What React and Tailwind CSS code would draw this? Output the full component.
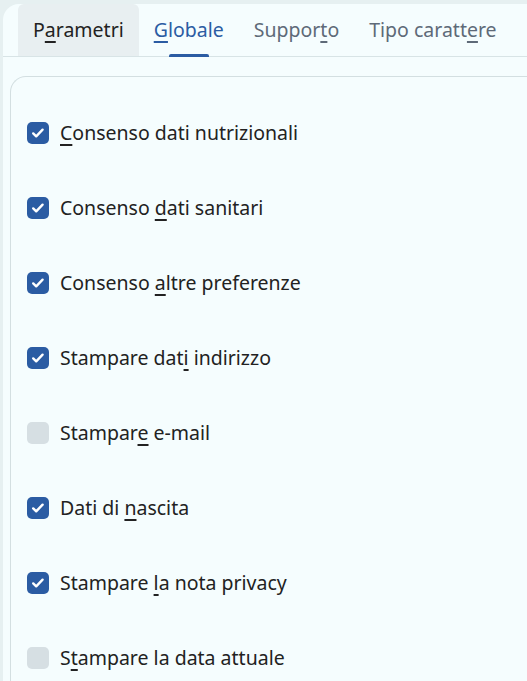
import React, { useState } from 'react';

const tabs = [
  { pre: 'P', key: 'a', post: 'rametri' },
  { pre: '', key: 'G', post: 'lobale' },
  { pre: 'Suppor', key: 't', post: 'o' },
  { pre: 'Tipo carat', key: 'te', post: 're', keyIdx: 1 },
];

const options = [
  { pre: '', key: 'C', post: 'onsenso dati nutrizionali', on: true },
  { pre: 'Consenso ', key: 'd', post: 'ati sanitari', on: true },
  { pre: 'Consenso ', key: 'a', post: 'ltre preferenze', on: true },
  { pre: 'Stampare dat', key: 'i', post: ' indirizzo', on: true },
  { pre: 'Stampar', key: 'e', post: ' e-mail', on: false },
  { pre: 'Dati di ', key: 'n', post: 'ascita', on: true },
  { pre: 'Stampare ', key: 'l', post: 'a nota privacy', on: true },
  { pre: 'S', key: 't', post: 'ampare la data attuale', on: false },
];

const Mnemonic = ({ pre, k, post }) => (
  <span>
    {pre}
    <span className="underline decoration-[2px] underline-offset-[4px]">{k}</span>
    {post}
  </span>
);

const Check = ({ on }) => (
  <span
    className={`flex h-[22px] w-[22px] shrink-0 items-center justify-center rounded-[5px] ${
      on ? 'bg-[#2b5ca3]' : 'bg-[#d6dfe3]'
    }`}
  >
    {on && (
      <svg width="16" height="16" viewBox="0 0 16 16" fill="none">
        <path d="M3.2 8.4l3 2.9 6.4-6.6" stroke="white" strokeWidth="2.4" strokeLinecap="round" strokeLinejoin="round" />
      </svg>
    )}
  </span>
);

export default function App() {
  const [checks, setChecks] = useState(options.map((o) => o.on));

  return (
    <div className="h-screen w-full overflow-hidden bg-[#e6f0f1] pl-[3px] pt-[4px]" style={{ fontFamily: '"Noto Sans", "Open Sans", sans-serif' }}>
      <div className="h-full rounded-tl-[16px] bg-[#f5fdfe]">
        {/* tab bar */}
        <div className="flex h-[53px] border-b border-[#d8e4e6] pl-[15px] text-[19.5px]">
          {tabs.map((t, i) => (
            <div
              key={i}
              className={`relative flex items-center px-[15px] pb-[1px] whitespace-nowrap ${
                i === 0 ? 'rounded-t-[6px] bg-[#e8eff1] text-[#222]' : i === 1 ? 'text-[#2b5ca3]' : 'text-[#5e6a78]'
              }`}
            >
              {i === 3 ? (
                <span>
                  Tipo carat<span>t</span>
                  <span className="underline decoration-[2px] underline-offset-[4px]">e</span>re
                </span>
              ) : (
                <Mnemonic pre={t.pre} k={t.key} post={t.post} />
              )}
              {i === 1 && (
                <span className="absolute bottom-[-1px] left-1/2 h-[3px] w-[40px] -translate-x-1/2 rounded-t-[2px] bg-[#2b5ca3]" />
              )}
            </div>
          ))}
        </div>

        {/* content card */}
        <div className="ml-[7px] mt-[19px] h-[700px] rounded-tl-[16px] border-l border-t border-[#d3dfe1] pl-[16px] pt-[18px]">
          {options.map((o, i) => (
            <label
              key={i}
              className="flex h-[75px] cursor-pointer items-center gap-[11px] text-[19.5px] text-[#222]"
              onClick={() => setChecks((c) => c.map((v, j) => (j === i ? !v : v)))}
            >
              <Check on={checks[i]} />
              <Mnemonic pre={o.pre} k={o.key} post={o.post} />
            </label>
          ))}
        </div>
      </div>
    </div>
  );
}
